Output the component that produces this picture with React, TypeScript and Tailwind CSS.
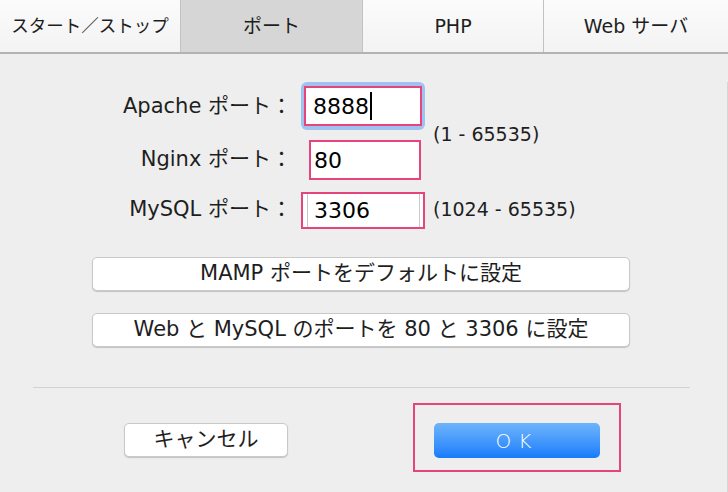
import React from "react";

const tabs = ["スタート／ストップ", "ポート", "PHP", "Web サーバ"];

const Btn = ({ children, className = "" }: { children: React.ReactNode; className?: string }) => (
    <div
        className={
            "flex items-center justify-center bg-white rounded-[5px] border border-[#c9c9c9] shadow-[0_1px_1px_rgba(0,0,0,0.18)] text-[21px] text-[#1e1e1e] " +
            className
        }
    >
        {children}
    </div>
);

export default function App() {
    return (
        <div className="w-[728px] h-[492px] overflow-hidden bg-[#eeeeee] font-['DejaVu_Sans','Noto_Sans_CJK_JP',sans-serif] text-[#1e1e1e]">
            {/* tab bar */}
            <div className="flex h-[54px] border-b-2 border-[#b3b3b3]">
                {tabs.map((t, i) => (
                    <div
                        key={t}
                        className={
                            i === 0
                                ? "w-[181px] flex items-center justify-center text-[17.5px] bg-gradient-to-b from-[#fbfbfb] to-[#f3f3f3] border-r border-[#c2c2c2]"
                                : i === 1
                                ? "w-[182px] flex items-center justify-center text-[19px] bg-[#d6d6d6] border-r border-[#c2c2c2]"
                                : i === 3
                                ? "flex-1 flex items-center justify-center text-[19px] bg-gradient-to-b from-[#fbfbfb] to-[#f3f3f3]"
                                : "w-[181px] flex items-center justify-center text-[19px] bg-gradient-to-b from-[#fbfbfb] to-[#f3f3f3] border-r border-[#c2c2c2]"
                        }
                    >
                        {t}
                    </div>
                ))}
            </div>

            <div className="h-[438px] border-r border-[#d6d6d6]">
                {/* port fields */}
                <div className="grid grid-cols-[292px_141px_1fr] grid-rows-[48px_40px_39px] gap-y-[10px] mt-[28px]">
                    <div className="col-start-1 row-start-1 self-center text-right text-[21px] pt-[2px]">Apache ポート：</div>
                    <div className="col-start-2 row-start-1 ml-[9px] w-[124px] h-[48px] rounded-[6px] bg-[#9fc2ef] px-[3px] py-[4px]">
                        <div className="h-full border-2 border-[#e5457c] bg-white flex items-center pl-[7px] text-[22px] text-black">
                            8888<span className="w-[2px] h-[28px] bg-black ml-[1px]" />
                        </div>
                    </div>
                    <div className="col-start-3 row-start-1 row-span-2 self-center pt-[6px] text-[19px]">(1 - 65535)</div>

                    <div className="col-start-1 row-start-2 self-center text-right text-[21px]">Nginx ポート：</div>
                    <div className="col-start-2 row-start-2 ml-[17px] w-[112px] h-[40px] border-2 border-[#e5457c] bg-white flex items-center">
                        <span className="pl-[3px] text-[22px] text-black">80</span>
                    </div>

                    <div className="col-start-1 row-start-3 self-center text-right text-[21px]">MySQL ポート：</div>
                    <div className="col-start-2 row-start-3 self-end ml-[9px] w-[124px] h-[37px] border-2 border-[#e5457c] bg-white flex items-center">
                        <div className="h-full w-px bg-[#c8c8c8] ml-[4px]" />
                        <span className="pl-[6px] text-[22px] text-black flex-1">3306</span>
                        <div className="h-full w-px bg-[#c8c8c8] mr-[3px]" />
                    </div>
                    <div className="col-start-3 row-start-3 self-center text-[19px]">(1024 - 65535)</div>
                </div>

                {/* preset buttons */}
                <Btn className="mt-[28px] ml-[92px] w-[538px] h-[34px]">MAMP ポートをデフォルトに設定</Btn>
                <Btn className="mt-[22px] ml-[92px] w-[538px] h-[34px]">Web と MySQL のポートを 80 と 3306 に設定</Btn>

                <div className="mt-[40px] ml-[33px] w-[657px] h-px bg-[#d2d2d2]" />

                {/* dialog buttons */}
                <div className="flex items-start ml-[124px]">
                    <Btn className="mt-[35px] w-[164px] h-[34px]">キャンセル</Btn>
                    <div className="ml-[125px] mt-[15px] w-[208px] h-[69px] border-2 border-[#e5457c]">
                        <div className="ml-[19px] mt-[18px] w-[166px] h-[35px] rounded-[5px] bg-gradient-to-b from-[#6db4fb] to-[#137cfb] flex items-center justify-center text-white text-[20px] tracking-[0.35em] font-light">
                            OK
                        </div>
                    </div>
                </div>
            </div>
        </div>
    );
}
